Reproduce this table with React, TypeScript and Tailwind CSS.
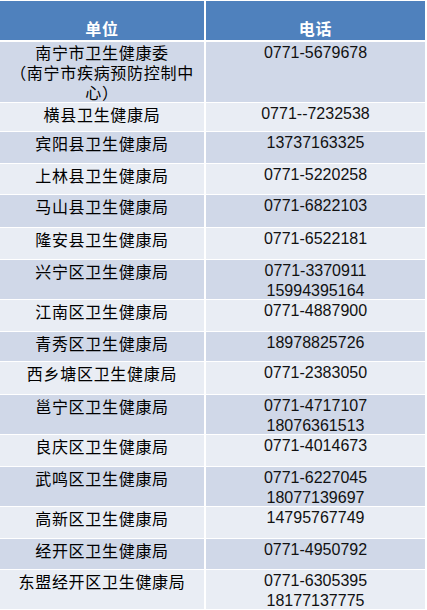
import React from "react";

type Row = { name: string[]; phone: string[]; h: string };

const rows: Row[] = [
  { name: ["南宁市卫生健康委", "（南宁市疾病预防控制中", "心）"], phone: ["0771-5679678"], h: "h-[60px]" },
  { name: ["横县卫生健康局"], phone: ["0771--7232538"], h: "h-[28px]" },
  { name: ["宾阳县卫生健康局"], phone: ["13737163325"], h: "h-[31px]" },
  { name: ["上林县卫生健康局"], phone: ["0771-5220258"], h: "h-[30px]" },
  { name: ["马山县卫生健康局"], phone: ["0771-6822103"], h: "h-[32px]" },
  { name: ["隆安县卫生健康局"], phone: ["0771-6522181"], h: "h-[31px]" },
  { name: ["兴宁区卫生健康局"], phone: ["0771-3370911", "15994395164"], h: "h-[39px]" },
  { name: ["江南区卫生健康局"], phone: ["0771-4887900"], h: "h-[31px]" },
  { name: ["青秀区卫生健康局"], phone: ["18978825726"], h: "h-[29px]" },
  { name: ["西乡塘区卫生健康局"], phone: ["0771-2383050"], h: "h-[32px]" },
  { name: ["邕宁区卫生健康局"], phone: ["0771-4717107", "18076361513"], h: "h-[39px]" },
  { name: ["良庆区卫生健康局"], phone: ["0771-4014673"], h: "h-[31px]" },
  { name: ["武鸣区卫生健康局"], phone: ["0771-6227045", "18077139697"], h: "h-[39px]" },
  { name: ["高新区卫生健康局"], phone: ["14795767749"], h: "h-[31px]" },
  { name: ["经开区卫生健康局"], phone: ["0771-4950792"], h: "h-[30px]" },
  { name: ["东盟经开区卫生健康局"], phone: ["0771-6305395", "18177137775"], h: "h-[39px]" },
];

const cjk = { fontFamily: '"Noto Sans CJK SC", "Noto Sans", sans-serif' };
const num = { fontFamily: '"Liberation Sans", Arial, sans-serif' };

export default function App() {
  return (
    <div className="w-[427px] h-[610px] bg-white overflow-hidden pt-[1px]">
      <div className="grid grid-cols-[204px_219px] gap-x-[2px] h-[39px]">
        <div
          className="bg-[#4f81bd] text-white font-bold text-[16px] flex items-end justify-center pb-[2px] leading-[20px] tracking-[0.7px]"
          style={cjk}
        >
          单位
        </div>
        <div
          className="bg-[#4f81bd] text-white font-bold text-[16px] flex items-end justify-center pb-[2px] leading-[20px] tracking-[0.7px]"
          style={cjk}
        >
          电话
        </div>
      </div>
      <div className="mt-[2px] flex flex-col gap-y-[1px]">
        {rows.map((r, i) => {
          const bg = i % 2 === 0 ? "bg-[#d0d8e8]" : "bg-[#e9edf4]";
          return (
            <div key={i} className={`grid grid-cols-[204px_219px] gap-x-[2px] shrink-0 ${r.h}`}>
              <div
                className={`${bg} text-black text-[16px] leading-[20px] tracking-[0.7px] text-center ${i === 0 ? "pt-0" : "pt-[1px]"} overflow-hidden`}
                style={cjk}
              >
                {r.name.map((l, j) => (
                  <div key={j}>{l}</div>
                ))}
              </div>
              <div
                className={`${bg} text-[#111] text-[16px] leading-[20px] text-center pt-[1px] overflow-hidden`}
                style={num}
              >
                {r.phone.map((l, j) => (
                  <div key={j}>{l}</div>
                ))}
              </div>
            </div>
          );
        })}
      </div>
    </div>
  );
}
